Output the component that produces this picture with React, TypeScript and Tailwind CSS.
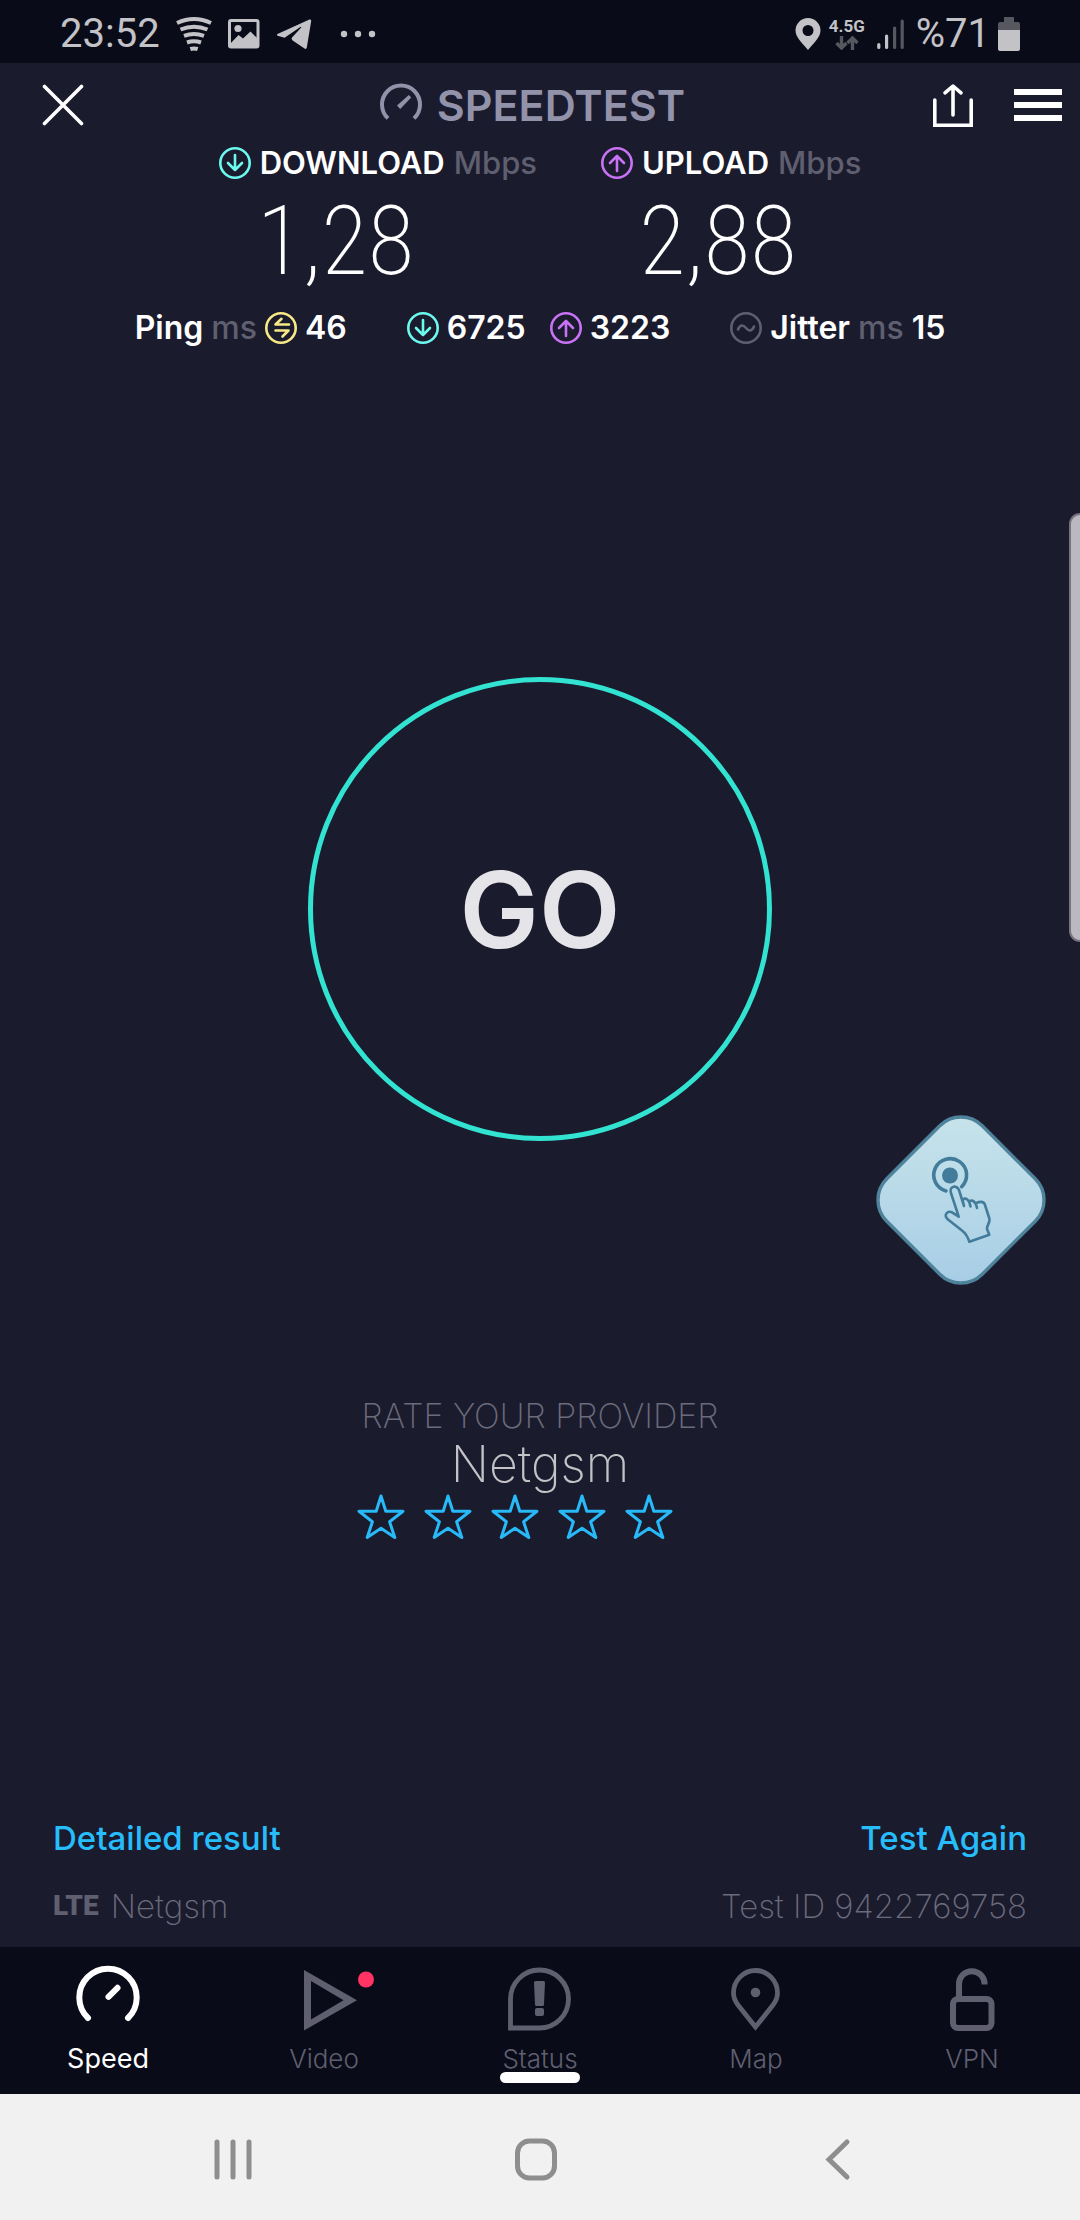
import React from 'react';

const MUTED = '#5f5f70';
const CYAN = '#6cf9ee';
const PURPLE = '#c873f5';
const YELLOW = '#f8e886';

type MetricKind = 'down' | 'up' | 'ping' | 'jitter';

const metricShapes: Record<MetricKind, { color: string; d: string }> = {
  down: { color: CYAN, d: 'M16 8V23M9 16L16 23L23 16' },
  up: { color: PURPLE, d: 'M16 24V9M9 16L16 9L23 16' },
  ping: { color: YELLOW, d: 'M24 12.5H10.5L16.5 6.8M10.5 18.5H23.5L17.5 24.5' },
  jitter: { color: MUTED, d: 'M8 17.5C10 12.5 13 12.5 16 16S22 19.5 24 14.5' },
};

function MetricIcon({ kind }: { kind: MetricKind }) {
  const { color, d } = metricShapes[kind];
  return (
    <svg className="size-8 shrink-0" viewBox="0 0 32 32" fill="none" stroke={color} strokeLinecap="round" strokeLinejoin="round">
      <circle cx="16" cy="16" r="14.7" strokeWidth="2.6" />
      <path d={d} strokeWidth="2.6" />
    </svg>
  );
}

function StatusBar() {
  return (
    <div className="flex h-[63px] items-center justify-between bg-[#090b18] pl-[60px] pr-[60px] pt-1 font-[Roboto,sans-serif] text-[40px] leading-[48px] text-[#c3c2c7]">
      <div className="flex items-center">
        <span>23:52</span>
        <svg className="ml-4 h-9 w-[36px]" viewBox="0 0 36 36" fill="none" stroke="currentColor" strokeWidth="4">
          <path d="M1 7Q18 -1 35 7" />
          <path d="M4.5 13.5Q18 8 31.5 13.5" />
          <path d="M8 19.8Q18 16.3 28 19.8" />
          <path d="M11 26.5Q18 24 25 26.5" />
          <path d="M14.3 33Q18 31.8 21.7 33" />
        </svg>
        <svg className="ml-4 h-[30px] w-8" viewBox="0 0 32 30">
          <rect x="1.5" y="1.5" width="28.5" height="26.5" rx="1.5" fill="none" stroke="currentColor" strokeWidth="3" />
          <circle cx="10" cy="9.5" r="3.6" fill="currentColor" />
          <path d="M2 25L10.5 16L15 19.5L22.5 12.5L30 20V28H2Z" fill="currentColor" />
        </svg>
        <svg className="ml-4 h-8 w-9" viewBox="0 0 36 32" fill="currentColor">
          <path d="M1.5 16Q0 17 1.6 17.8L8.5 19.8L24 9.2Q26 8.2 25 9.8L16 19.6Q15 21 16.3 22.2L28.5 30.6Q30.3 31.8 30.8 29.6L35.2 3Q35.4 1 33.4 1.6Z" />
        </svg>
        <svg className="ml-7 h-2 w-9" viewBox="0 0 36 8" fill="currentColor">
          <circle cx="4" cy="4" r="3.2" />
          <circle cx="18" cy="4" r="3.2" />
          <circle cx="32" cy="4" r="3.2" />
        </svg>
      </div>
      <div className="flex items-center">
        <svg className="h-8 w-[26px]" viewBox="0 0 26 32" fill="currentColor" fillRule="evenodd">
          <path d="M13 0A12.5 12.5 0 0 0 .5 12.5C.5 20 9 26.5 13 32C17 26.5 25.5 20 25.5 12.5A12.5 12.5 0 0 0 13 0ZM13 7a5.5 5.5 0 1 1 0 11a5.5 5.5 0 0 1 0-11Z" />
        </svg>
        <div className="ml-2 flex flex-col items-center gap-[2px]">
          <span className="text-[17px] font-bold leading-4">4.5G</span>
          <svg className="h-[14px] w-6" viewBox="0 0 24 14" fill="none" stroke="#57575f" strokeWidth="3.4">
            <path d="M6.5 0V12M1.5 7L6.5 12L11.5 7M17.5 14V2M12.5 7L17.5 2L22.5 7" />
          </svg>
        </div>
        <svg className="ml-3 h-8 w-[27px]" viewBox="0 0 27 32" strokeWidth="3.2" strokeLinecap="round">
          <path d="M1.8 26.5V29.5M9.6 18V29.5" stroke="currentColor" />
          <path d="M17.6 10V29.5M25.2 3V29.5" stroke="#57575f" />
        </svg>
        <span className="ml-3">%71</span>
        <svg className="ml-2 h-[34px] w-[22px]" viewBox="0 0 22 34">
          <path d="M6 0H16V5H20Q22 5 22 7V14H0V7Q0 5 2 5H6Z" fill="#57575f" />
          <path d="M0 13H22V32Q22 34 20 34H2Q0 34 0 32Z" fill="currentColor" />
        </svg>
      </div>
    </div>
  );
}

function Header() {
  return (
    <header className="grid h-[84px] grid-cols-[1fr_auto_1fr] items-center">
      <button aria-label="Close" className="ml-[42px] justify-self-start">
        <svg className="size-[42px]" viewBox="0 0 42 42" stroke="white" strokeWidth="3.6" strokeLinecap="round">
          <path d="M2.5 2.5L39.5 39.5M39.5 2.5L2.5 39.5" />
        </svg>
      </button>
      <h1 className="mr-4 flex items-center gap-[14px] text-[43px] font-semibold leading-[48px] text-[#9293aa]">
        <svg className="size-11" viewBox="0 0 44 44" fill="none">
          <path d="M9 35.4A19 19 0 1 1 35 35.4" stroke="currentColor" strokeWidth="4" />
          <path d="M18 22.5L29.8 12L32.2 14.4L21.2 26Z" fill="currentColor" />
        </svg>
        SPEEDTEST
      </h1>
      <div className="mr-[18px] flex items-center gap-10 justify-self-end">
        <button aria-label="Share">
          <svg className="h-[44px] w-[42px]" viewBox="0 0 42 44" fill="none" stroke="white" strokeWidth="3.6" strokeLinecap="round">
            <path d="M2.8 17V42.2H39.2V17" />
            <path d="M21 32V3.5M13 9.8L21 3L29 9.8" strokeLinejoin="round" />
          </svg>
        </button>
        <button aria-label="Menu" className="flex flex-col gap-[7px]">
          <span className="h-[6px] w-12 bg-white" />
          <span className="h-[6px] w-12 bg-white" />
          <span className="h-[6px] w-12 bg-white" />
        </button>
      </div>
    </header>
  );
}

function SpeedResult({ kind, label, value }: { kind: MetricKind; label: string; value: string }) {
  return (
    <div>
      <div className="flex h-8 items-center gap-[9px] text-[31px] leading-8">
        <MetricIcon kind={kind} />
        <span className="font-semibold text-white">{label}</span>
        <span className="font-medium text-[#5f5f70]">Mbps</span>
      </div>
      <div className="pl-[38px] font-['Noto_Sans_ExtraCondensed','Roboto_Condensed',Roboto,sans-serif] text-[96px] font-extralight leading-[125px] text-white">
        {value}
      </div>
    </div>
  );
}

function GoButton() {
  return (
    <button className="size-[464px] rounded-full border-[5px] border-[#33e3d2] text-[106px] font-semibold text-[#e5e4e8]">
      GO
    </button>
  );
}

function RateProvider() {
  return (
    <section className="flex flex-col items-center">
      <h2 className="text-[34px] font-extralight leading-10 text-[#6b6b7c]">RATE YOUR PROVIDER</h2>
      <p className="text-[50px] font-extralight leading-[56px] text-[#c3c2c7]">Netgsm</p>
      <div className="mr-[50px] flex gap-[19px]">
        {[1, 2, 3, 4, 5].map((n) => (
          <button key={n} aria-label={`Rate ${n}`}>
            <svg className="size-12" viewBox="0 0 48 48" fill="none" stroke="#27b9f8" strokeWidth="3" strokeLinejoin="round">
              <path d="M24 4L28.8 19.3H46L32.6 29.8L37.8 45.5L24 36.2L10.2 45.5L15.4 29.8L2 19.3H19.2Z" />
            </svg>
          </button>
        ))}
      </div>
    </section>
  );
}

function TouchShortcut() {
  return (
    <button aria-label="Touch shortcut" className="absolute right-[34px] top-[1115px]">
      <svg className="size-[170px]" viewBox="0 0 170 170" fill="none">
        <defs>
          <linearGradient id="tile" x1="0" y1="0" x2="1" y2="1">
            <stop offset="0" stopColor="#c9e5eb" />
            <stop offset="1" stopColor="#a5cce5" />
          </linearGradient>
        </defs>
        <rect x="17.5" y="17.5" width="135" height="135" rx="30" transform="rotate(45 85 85)" fill="url(#tile)" stroke="#4f829b" strokeWidth="3.4" />
        <g stroke="#437c9a" strokeLinecap="round" strokeLinejoin="round">
          <path d="M85.7 71.7A16.4 16.4 0 1 0 70 75.9" strokeWidth="3.6" />
          <path
            d="M82.7 101.7L74.8 77.5C73 71 81 69.5 83 75L88 91L86.5 84.5C90 82.5 93 84 94.5 91.5L93 86.5C96.5 84.5 99.5 86 101 93L99.8 88.2C104 86.3 108 86 109 90L113.5 104C114 108 110.5 111 111 114L113.3 119.7L93.3 126.7C91.5 121 90 118.5 86 115.5L72 104.5C67 100 71.5 95.5 76 97.3Z"
            strokeWidth="2.6"
          />
        </g>
        <circle cx="74" cy="60.5" r="8" fill="#437c9a" />
      </svg>
    </button>
  );
}

const tabs = [
  {
    label: 'Speed',
    active: true,
    icon: (
      <g fill="none" stroke="currentColor" strokeWidth="6" strokeLinecap="round">
        <path d="M16 57A28.7 28.7 0 1 1 56 57" />
        <path d="M36.5 35.8L45.5 26.8" />
      </g>
    ),
  },
  {
    label: 'Video',
    icon: (
      <>
        <path d="M16 9L69 39.2L16 69.5ZM23 20V58.5L55.5 39.2Z" fill="currentColor" fillRule="evenodd" />
        <circle cx="78" cy="18.5" r="8" fill="#ff3465" />
      </>
    ),
  },
  {
    label: 'Status',
    icon: (
      <>
        <path d="M6.5 67V38.2A29 29 0 1 1 35.5 67Z" fill="none" stroke="currentColor" strokeWidth="4.8" />
        <path d="M30 21.5Q30 20 31.5 20H39.5Q41 20 41 21.5L40 43.5Q40 45 38.5 45H32.5Q31 45 31 43.5Z" fill="currentColor" />
        <rect x="31" y="47" width="9" height="8" rx="2" fill="currentColor" />
      </>
    ),
  },
  {
    label: 'Map',
    icon: (
      <>
        <path d="M35.5 66L18 44C15 40 13.5 36 13.5 32A22 22.5 0 0 1 57.5 32C57.5 36 56 40 53 44Z" fill="none" stroke="currentColor" strokeWidth="4.8" />
        <circle cx="35.5" cy="31.5" r="4.8" fill="currentColor" />
      </>
    ),
  },
  {
    label: 'VPN',
    icon: (
      <g fill="none" stroke="currentColor" strokeWidth="6">
        <rect x="17" y="38" width="38.5" height="29" rx="5" />
        <path d="M23 38V23A12.8 12.8 0 0 1 48.6 23V23.5" />
      </g>
    ),
  },
];

function TabBar() {
  return (
    <nav className="relative grid grid-cols-5 bg-[#090b18] pb-[19px] pt-[14px]">
      {tabs.map((tab) => (
        <a key={tab.label} href="#" className={`flex flex-col items-center gap-[10px] ${tab.active ? 'text-white' : 'text-[#5f5f70]'}`}>
          <svg className="size-[72px] overflow-visible" viewBox="0 0 72 72">{tab.icon}</svg>
          <span className={tab.active ? 'text-[27px] leading-8' : 'text-[26px] font-light leading-8'}>{tab.label}</span>
        </a>
      ))}
      <div className="absolute bottom-[11px] left-1/2 h-[11px] w-20 -translate-x-1/2 rounded-full bg-white" />
    </nav>
  );
}

function SystemNav() {
  return (
    <div className="flex h-[126px] items-center justify-between bg-[#f1f1f1] pl-[209px] pr-[218px] pt-1 text-[#8e8e8e]">
      <button aria-label="Recent apps">
        <svg className="size-12" viewBox="0 0 48 48" stroke="currentColor" strokeWidth="5" strokeLinecap="round">
          <path d="M8 7V42M24 7V42M40 7V42" />
        </svg>
      </button>
      <button aria-label="Home">
        <svg className="size-12" viewBox="0 0 48 48" fill="none" stroke="currentColor" strokeWidth="5">
          <rect x="5.5" y="6" width="37" height="37" rx="12" />
        </svg>
      </button>
      <button aria-label="Back">
        <svg className="size-12" viewBox="0 0 48 48" fill="none" stroke="currentColor" strokeWidth="5" strokeLinecap="round">
          <path d="M33 7L15 24.5L33 42" />
        </svg>
      </button>
    </div>
  );
}

export default function App() {
  return (
    <div className="relative flex min-h-screen flex-col overflow-hidden bg-[#1b1b2e] font-[Inter,sans-serif]">
      <StatusBar />
      <Header />
      <main className="flex flex-1 flex-col">
        <div className="flex justify-center gap-16">
          <SpeedResult kind="down" label="DOWNLOAD" value="1,28" />
          <SpeedResult kind="up" label="UPLOAD" value="2,88" />
        </div>
        <div className="mt-2 flex justify-center gap-[60px] text-[32px] font-semibold leading-8 text-white">
          <div className="flex items-center gap-2">
            Ping <span className="font-medium text-[#5f5f70]">ms</span>
            <MetricIcon kind="ping" /> 46
          </div>
          <div className="flex items-center gap-2">
            <MetricIcon kind="down" /> 6725
            <span className="ml-4 flex items-center gap-2">
              <MetricIcon kind="up" /> 3223
            </span>
          </div>
          <div className="flex items-center gap-2">
            <MetricIcon kind="jitter" /> Jitter <span className="font-medium text-[#5f5f70]">ms</span> 15
          </div>
        </div>
        <div className="mt-[333px] flex justify-center">
          <GoButton />
        </div>
        <div className="mt-[255px]">
          <RateProvider />
        </div>
        <footer className="mt-auto flex flex-col gap-7 px-[53px] pb-[21px] text-[33px] leading-10">
          <div className="flex justify-between font-medium text-[#27bdfb]">
            <a href="#">Detailed result</a>
            <a href="#">Test Again</a>
          </div>
          <div className="flex justify-between font-extralight text-[#6b6b7c]">
            <span className="flex items-center gap-3">
              <span className="font-[Roboto,sans-serif] text-[28px] font-black leading-10 text-[#5f5f70]">LTE</span>
              Netgsm
            </span>
            <span>Test ID 9422769758</span>
          </div>
        </footer>
      </main>
      <TabBar />
      <SystemNav />
      <div className="absolute right-0 top-[513px] h-[429px] w-[11px] rounded-l-xl border-2 border-r-0 border-[#77747f] bg-[#bbb8bf]" />
      <TouchShortcut />
    </div>
  );
}
